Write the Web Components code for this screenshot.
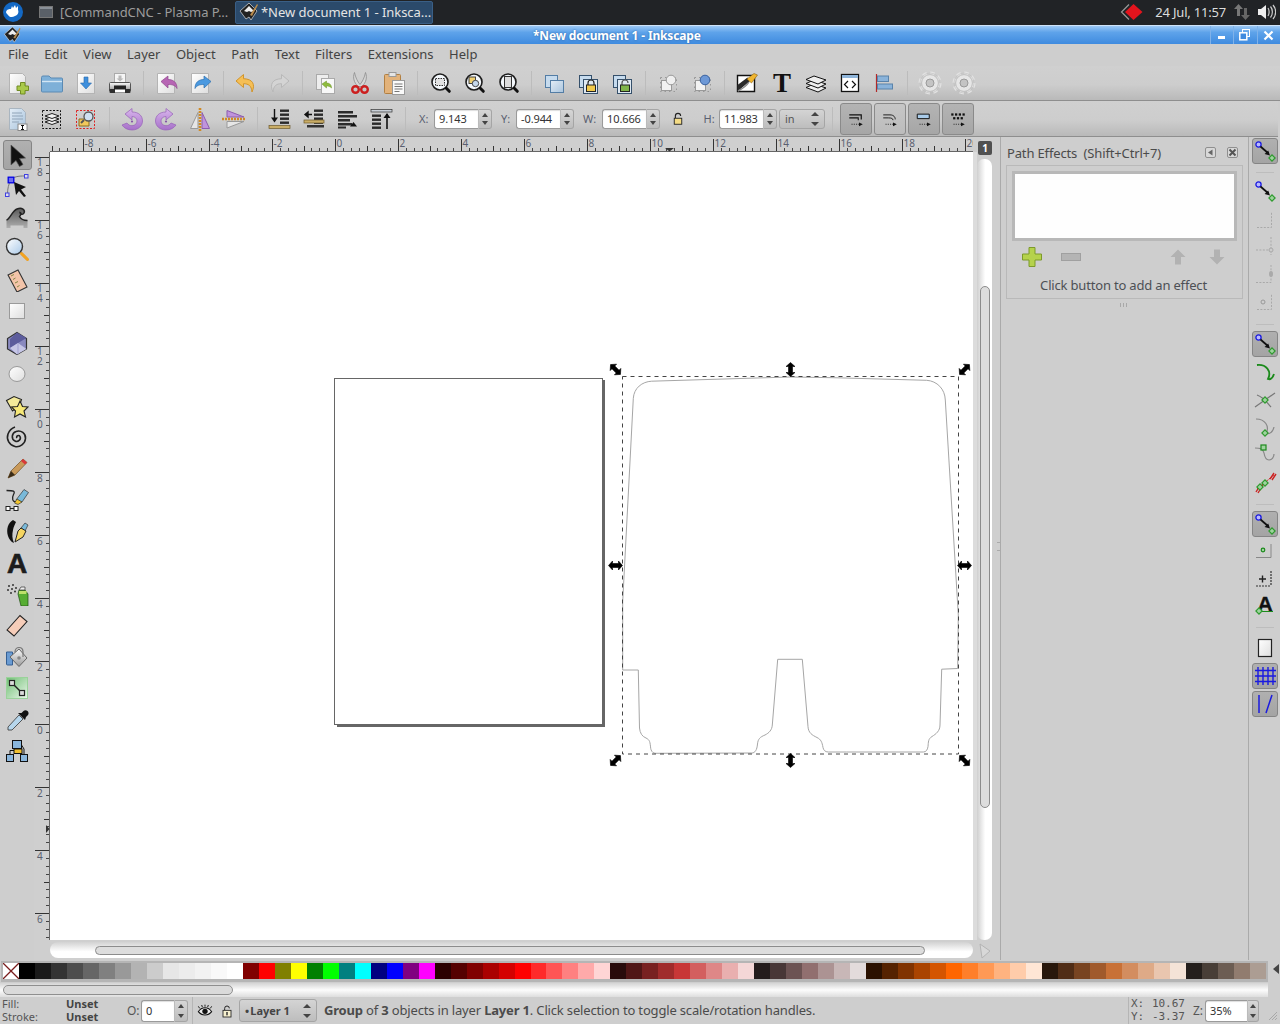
<!DOCTYPE html>
<html>
<head>
<meta charset="utf-8">
<title>New document 1 - Inkscape</title>
<style>
html, body { margin: 0; height: 100%; background: #cecece; overflow: hidden; }
body { font: 13px "Noto Sans", "Liberation Sans", sans-serif; color: #444; }
</style>
</head>
<body>
<inkscape-app></inkscape-app>
<script>
const DEFS = `<defs>
<linearGradient id="page" x1="0" y1="0" x2="1" y2="1"><stop offset="0" stop-color="#fff"/><stop offset="1" stop-color="#dedede"/></linearGradient>
<linearGradient id="blue" x1="0" y1="0" x2="1" y2="1"><stop offset="0" stop-color="#e4eef7"/><stop offset="1" stop-color="#a9c4dd"/></linearGradient>
<linearGradient id="purple" x1="0" y1="0" x2="0" y2="1"><stop offset="0" stop-color="#d9b6ec"/><stop offset="1" stop-color="#a670c9"/></linearGradient>
<linearGradient id="green" x1="0" y1="0" x2="1" y2="1"><stop offset="0" stop-color="#6fbf73"/><stop offset="1" stop-color="#eaf6ea"/></linearGradient>
<linearGradient id="steel" x1="0" y1="0" x2="0" y2="1"><stop offset="0" stop-color="#fafafa"/><stop offset="1" stop-color="#999"/></linearGradient>
<linearGradient id="steel2" x1="0" y1="0" x2="0" y2="1"><stop offset="0" stop-color="#5a5a5a"/><stop offset="1" stop-color="#aeaeae"/></linearGradient>
<linearGradient id="lens" x1="0" y1="0" x2="1" y2="1"><stop offset="0" stop-color="#fff"/><stop offset="1" stop-color="#a8c8e8"/></linearGradient>
</defs>`;

const lens = (inner) => `<g transform="translate(1.5 .5)"><circle cx="10.5" cy="10.5" r="8" fill="#f4f8fc" stroke="#1c1c1c" stroke-width="1.6"/>${inner}<path d="M16.8 16.8l3 3" stroke="#111" stroke-width="3" stroke-linecap="round"/></g>`;
const gear = `<circle cx="12" cy="12" r="10" fill="none" stroke="#e2e2e2" stroke-width="3" stroke-dasharray="4.4 3.45"/><circle cx="12" cy="12" r="10" fill="none" stroke="#bbb" stroke-width=".5"/><circle cx="12" cy="12" r="8.4" fill="#e6e6e6" stroke="#c0c0c0"/><circle cx="12" cy="12" r="4" fill="#c4c4c4" stroke="#9a9a9a"/>`;
const stack = (x, y) => `<g fill="#2a2a2a">${[0, 4, 8, 12].map(d => `<rect x="${x}" y="${y + d}" width="9" height="2.4"/>`).join("")}</g>`;
const nodeSq = (x, y, c = "#2f9b2f") => `<rect x="${x - 2.2}" y="${y - 2.2}" width="4.4" height="4.4" transform="rotate(45 ${x} ${y})" fill="#9fd39f" stroke="${c}" stroke-width="1.2"/>`;
const snapArrow = `<circle cx="5.5" cy="5.5" r="2.6" fill="#b9b9ff" stroke="#1a1ae0" stroke-width="1.3"/><path d="M7.5 7.5l8 7" stroke="#111" stroke-width="1.7"/><path d="M17 16.5l-5.4-1.4 3.6-3.6z" fill="#111"/>${nodeSq(19, 19)}`;
const dimLine = (d) => `<path d="${d}" fill="none" stroke="#a9a9a9" stroke-width="1" stroke-dasharray="2 1.4"/>`;
const tfArrow = `<path d="M6 19h10" stroke="#111" stroke-dasharray="1.5 1.5"/><path d="M16 16.5l5 2.5-5 2.5z" fill="#111"/>`;

const ICONS = {
  "new": `<path d="M3.5 2.5h13l3 3v17h-16z" fill="url(#page)" stroke="#b4b4b4"/><path d="M14.5 11.5h4.5v3.5h3.5v4.5h-3.5v3.5h-4.5v-3.5h-3.5v-4.5h3.5z" fill="#a9c94a" stroke="#718c22"/>`,
  "open": `<path d="M1.5 6.5q0-1.5 1.5-1.5h6l2 2h10.5q1 0 1 1v12q0 1-1 1H2.5q-1 0-1-1z" fill="#7eb0d8" stroke="#5a8ab4"/><path d="M2 10.5h20" stroke="#d3e6f4" stroke-width="1.4"/>`,
  "save": `<rect x="3.5" y="2.5" width="17" height="20" fill="url(#page)" stroke="#b4b4b4"/><path d="M10 6h4v6h3.5l-5.5 6-5.5-6H10z" fill="#3e8fdc" stroke="#2a6aad" stroke-width=".6"/>`,
  "print": `<rect x="6.5" y="2.5" width="11" height="9" fill="#f5f5f5" stroke="#aaa"/><path d="M10.5 4.5h3v3h2l-3.5 3-3.5-3h2z" fill="#b9b9b9"/><path d="M2.5 11.5h19q1 0 1 1v7h-21v-7q0-1 1-1z" fill="url(#steel)" stroke="#555"/><rect x="1.5" y="18" width="21" height="4" rx="1" fill="#2e2e2e"/><rect x="6" y="14.5" width="12" height="4" fill="#222"/><rect x="7" y="18.5" width="10" height="3" fill="#fff"/>`,
  "import": `<path d="M2.5 2.5h17v20h-17z" fill="url(#page)" stroke="#b4b4b4"/><path d="M6 10.5l7-5.5v3.5c5 0 9 2.5 9 9-2-3.5-5-4-9-4V17z" fill="#b765b4" stroke="#8e478c" stroke-width=".7"/>`,
  "export": `<path d="M2.5 2.5h17v20h-17z" fill="url(#page)" stroke="#b4b4b4"/><path d="M22 10.5l-7-5.5v3.5c-5 0-9 2.5-9 9 2-3.5 5-4 9-4V17z" fill="#4a99e0" stroke="#2f70ad" stroke-width=".7"/>`,
  "undo": `<path d="M10.5 3.5L3 10l7.5 6.5v-3.8c5 0 8 2 8.5 8.3 3.5-7.5 1-13-8.5-13.3z" fill="#f6bf55" stroke="#d1952c"/>`,
  "redo": `<path d="M13.5 3.5L21 10l-7.5 6.5v-3.8c-5 0-8 2-8.5 8.3-3.5-7.5-1-13 8.5-13.3z" fill="#d4d4d4" stroke="#b8b8b8"/>`,
  "dup": `<rect x="3.5" y="3.5" width="12" height="15" fill="#eee" stroke="#aaa"/><rect x="8.5" y="7.5" width="13" height="15" fill="#f8f8f8" stroke="#aaa"/><path d="M9 13l4.5-3v2c3 0 5 1.5 5 5-1.5-1.5-3-2-5-2v2z" fill="#8fbc3f" stroke="#6a9325" stroke-width=".5"/>`,
  "cut": `<path d="M6.5 1.5c1 5 3 9 5.5 12 2.5-3 4.5-7 5.5-12 2 5 .5 10-3.5 14h-4c-4-4-5.5-9-3.5-14z" fill="#d6d6d6" stroke="#8b8b8b" stroke-width=".8"/><circle cx="7.5" cy="18.5" r="3.3" fill="none" stroke="#cc1f1f" stroke-width="2.4"/><circle cx="16.5" cy="18.5" r="3.3" fill="none" stroke="#cc1f1f" stroke-width="2.4"/>`,
  "paste": `<rect x="2.5" y="3.5" width="16" height="19" rx="1" fill="#e2b27a" stroke="#b17f42"/><rect x="7" y="1.5" width="7" height="4" fill="#e5e5e5" stroke="#999"/><rect x="10.5" y="9.5" width="12" height="14" fill="#fafafa" stroke="#9a9a9a"/><path d="M12.5 13h8M12.5 15.5h8M12.5 18h8M12.5 20.5h5" stroke="#777"/>`,
  "zoomsel": lens(`<rect x="6" y="7" width="9" height="7" fill="#e2e2e2" stroke="#333" stroke-dasharray="1.5 1"/>`),
  "zoomdraw": lens(`<rect x="5.5" y="5.5" width="6.5" height="6.5" fill="#f0d070" stroke="#444"/><circle cx="12" cy="12" r="3.2" fill="#c5d8ec" stroke="#444"/>`),
  "zoompage": lens(`<rect x="7" y="5" width="7" height="11" fill="#ddd" stroke="#333"/>`),
  "dupobj": `<rect x="3.5" y="4.5" width="12" height="12" fill="#c6dbee" stroke="#537da5"/><rect x="8.5" y="9.5" width="13" height="12" fill="url(#blue)" stroke="#537da5"/>`,
  "clone": `<rect x="3.5" y="4.5" width="12" height="12" fill="#c6dbee" stroke="#35506b"/><rect x="7.5" y="8.5" width="14" height="14" fill="#dfe9f2" stroke="#35506b"/><path d="M12 14v-2a3 3 0 016 0v2" fill="none" stroke="#222" stroke-width="1.2"/><rect x="10.5" y="14" width="9" height="6.5" fill="#f2c94a" stroke="#222"/>`,
  "unlink": `<rect x="3.5" y="4.5" width="12" height="12" fill="#c6dbee" stroke="#35506b"/><rect x="7.5" y="8.5" width="14" height="14" fill="#dfe9f2" stroke="#35506b"/><path d="M12 14v-2a3 3 0 016 0" fill="none" stroke="#555" stroke-width="1.2"/><rect x="10.5" y="14" width="9" height="6.5" fill="#7fb44a" stroke="#222"/>`,
  "group": `<path d="M4.5 6.5v14h16v-14z" fill="none" stroke="#999" stroke-dasharray="1.5 3"/><rect x="5.5" y="9.5" width="10" height="10" fill="#f2f2f2" stroke="#999"/><circle cx="15" cy="9" r="4.8" fill="#efefef" stroke="#999"/>`,
  "ungroup": `<path d="M4.5 6.5v14h16v-14z" fill="none" stroke="#999" stroke-dasharray="1.5 3"/><rect x="5.5" y="9.5" width="10" height="10" fill="#f2f2f2" stroke="#999"/><circle cx="15" cy="9" r="4.8" fill="#6d98d6" stroke="#3a62a0"/>`,
  "fill": `<path d="M2.5 4.5h17v16h-17z" fill="#fff" stroke="#111" stroke-width="1.4"/><path d="M2.5 20.5V14l10-7.5 3 3z" fill="#2a2a2a"/><path d="M12 8L19 2.5l3.5 1.5-6 8z" fill="#f0b52f" stroke="#8a6212" stroke-width=".6"/><path d="M3 20c4-2 8-4 11-9" stroke="#888" fill="none" stroke-width="1.4"/>`,
  "T": `<text x="12" y="21" text-anchor="middle" font-family="Liberation Serif" font-weight="700" font-size="27" fill="#111">T</text>`,
  "layers": `<path d="M2 16.5l8-3.5 12 4-8 4z" fill="#eee" stroke="#111"/><path d="M2 12.5l8-3.5 12 4-8 4z" fill="#eee" stroke="#111"/><path d="M2 8.5l8-3.5 12 4-8 4z" fill="#eee" stroke="#111"/>`,
  "xml": `<rect x="3.5" y="3.5" width="17" height="17" fill="#fff" stroke="#111" stroke-width="1.3"/><rect x="4" y="4" width="16" height="3" fill="#8fb5da"/><path d="M10 10l-3.5 3.5 3.5 3.5M14 10l3.5 3.5-3.5 3.5" fill="none" stroke="#111" stroke-width="1.2"/>`,
  "align": `<path d="M4.5 3v18" stroke="#b22a2a" stroke-width="1.2"/><rect x="5.5" y="5" width="11" height="5.5" fill="#8ab3da" stroke="#5a83aa"/><rect x="5.5" y="13" width="15" height="5" fill="#8ab3da" stroke="#5a83aa"/>`,
  "gear": gear,
  "seldoc": `<path d="M3.5 1.5h12l4 4v17h-16z" fill="url(#blue)" stroke="#a9b5c0"/><path d="M6 6h10M6 9h11M6 12h11M6 15h7" stroke="#90a4b8"/><rect x="12" y="17" width="9" height="6.5" fill="#fff" stroke="#888"/><path d="M15 18.5h3M16.5 18.5v4M15 22.5h3" stroke="#111"/>`,
  "selall": `<rect x="2.5" y="3.5" width="18" height="18" fill="none" stroke="#111" stroke-dasharray="2 1.5"/><g fill="#f2f2f2" stroke="#222"><path d="M5 15l7-2.5 7 2.5-7 2.5z"/><path d="M5 12l7-2.5 7 2.5-7 2.5z"/><path d="M5 9l7-2.5 7 2.5-7 2.5z"/></g>`,
  "seltouch": `<rect x="2.5" y="3.5" width="18" height="18" fill="none" stroke="#d22" stroke-dasharray="2 1.5"/><path d="M5 12h8l2 2v5H5z" fill="#f1c85c" stroke="#8a6d20"/><circle cx="14.5" cy="9.5" r="4.5" fill="#cfe0f0" stroke="#555" stroke-width="1.3"/><path d="M10 13l-3 3" stroke="#555" stroke-width="2"/>`,
  "rotccw": `<path d="M12 5c7 0 10.5 4 10.5 9 0 5-4.5 9-10.5 9-4.5 0-8-2-10-5l5-2c1 1.8 3 2.7 5 2.7 2.8 0 5-2 5-4.7S14.8 9.5 12 9.5V13L5 7l7-5.5z" fill="url(#purple)" stroke="#9560b8" stroke-width=".7"/><circle cx="12" cy="14.5" r="1.1" fill="#8552a8"/>`,
  "rotcw": `<path d="M12 5C5 5 1.5 9 1.5 14c0 5 4.5 9 10.5 9 4.5 0 8-2 10-5l-5-2c-1 1.8-3 2.7-5 2.7-2.8 0-5-2-5-4.7s2.2-4.5 5-4.5V13l7-6-7-5.5z" fill="url(#purple)" stroke="#9560b8" stroke-width=".7"/><circle cx="12" cy="14.5" r="1.1" fill="#8552a8"/>`,
  "fliph": `<path d="M10 5.5L2.5 21.5H10z" fill="#e6e6e6" stroke="#999"/><path d="M14 5.5L21.5 21.5H14z" fill="#bf94dc" stroke="#8c5cae"/><path d="M12 1v23" stroke="#d08a26" stroke-width="2.6" stroke-dasharray="2 1"/>`,
  "flipv": `<path d="M22 10L5 3.5V10z" fill="#bf94dc" stroke="#8c5cae"/><path d="M22 14.5L5 21V14.5z" fill="#e6e6e6" stroke="#999"/><path d="M0 12h24" stroke="#d08a26" stroke-width="2.6" stroke-dasharray="2 1"/>`,
  "tobottom": stack(12, 2.5) + `<path d="M6.5 2v10" stroke="#111" stroke-width="1.4"/><path d="M3 10.5h7l-3.5 5z" fill="#111"/><rect x="1" y="18.5" width="21" height="3" fill="#c9ad66" stroke="#6d5a2c" stroke-width=".7"/>`,
  "lower": stack(12, 2.5) + `<path d="M3 7.5h7M3 7.5l3-2.5v5z" stroke="#111" stroke-width="1.4" fill="#111"/><rect x="2" y="13" width="20" height="3" fill="#c9ad66" stroke="#6d5a2c" stroke-width=".7"/><rect x="5" y="18" width="17" height="2.5" fill="#333"/>`,
  "raise": `<g fill="#2a2a2a"><rect x="2" y="4" width="15" height="2.5"/><rect x="2" y="8" width="19" height="2.5"/><rect x="2" y="12" width="12" height="2.5"/><rect x="2" y="16" width="14" height="2.5"/></g><path d="M14 19.5h7L17.5 15z" fill="#111"/><rect x="2" y="19.5" width="8" height="2" fill="#2a2a2a"/>`,
  "totop": `<rect x="1" y="2.5" width="21" height="2.5" fill="#c9d0d8" stroke="#333" stroke-width=".7"/>` + stack(2, 7.5) + `<path d="M17 7v15" stroke="#111" stroke-width="1.6"/><path d="M13.5 11h7L17 6z" fill="#111"/>`,
  "tf1": `<path d="M3 6.5h16v6" fill="none" stroke="#111" stroke-width="1.6"/><path d="M3 10.5h12v3" fill="none" stroke="#111" stroke-width="1.4"/>` + tfArrow,
  "tf2": `<path d="M3 6.5h9c5 0 7 3 7 6" fill="none" stroke="#111" stroke-width="1.2"/><path d="M3 10.5h7c4 0 6 1 6 3" fill="none" stroke="#111" stroke-width="1.2"/>` + tfArrow,
  "tf3": `<path d="M3 5.5h16v6H3z" fill="#a9cbe9" stroke="#111" stroke-width="1.3"/>` + tfArrow,
  "tf4": `<g fill="#111"><rect x="3" y="4.5" width="3" height="3"/><rect x="8" y="4.5" width="3" height="3"/><rect x="13" y="4.5" width="3" height="3"/><rect x="18" y="4.5" width="3" height="3"/><rect x="5.5" y="9.5" width="3" height="3"/><rect x="10.5" y="9.5" width="3" height="3"/><rect x="15.5" y="9.5" width="3" height="3"/></g>` + tfArrow,
  "lock": `<path d="M8.5 11V8a3.5 3.5 0 017 0" fill="none" stroke="#222" stroke-width="1.5"/><rect x="7" y="11" width="10" height="8" fill="#f5dc85" stroke="#222" stroke-width="1.2"/>`,
  "eye": `<path d="M2 13c3-5 7-6 10-6s7 1 10 6c-3 4-7 5-10 5s-7-1-10-5z" fill="#eee" stroke="#111" stroke-width="1.6"/><circle cx="12" cy="12.5" r="4" fill="#111"/><path d="M4 8L2 5M8 6L7 3M12 5.5V2.5M16 6l1-3M20 8l2-3" stroke="#111" stroke-width="1.4"/>`,
  "lock1": `<path d="M8.5 11V8a3.5 3.5 0 017 0" fill="none" stroke="#222" stroke-width="1.5"/><rect x="6" y="11" width="12" height="10" fill="#f6f0cf" stroke="#222" stroke-width="1.3"/><rect x="11" y="13.5" width="2" height="5" fill="#222"/>`,

  "select": `<path d="M6 2v20l5-4.5 3.5 6 3.5-2-3.5-6 6-.5z" fill="#111" stroke="#555" stroke-width=".7"/>`,
  "node": `<path d="M6 6C8 3 13 1.8 20 2M6 6C3.5 10 2.5 15 2.5 20" fill="none" stroke="#777" stroke-width="1"/><rect x="3.2" y="3.2" width="5.6" height="5.6" fill="#6f6ff0" stroke="#0000e6" stroke-width="1.3"/><rect x="19.5" y=".5" width="3.5" height="3.5" fill="#dde" stroke="#4040e0"/><rect x=".5" y="19" width="3.5" height="3.5" fill="#dde" stroke="#4040e0"/><path d="M9 8l12 5-5 2.5 5 6.5-2 1-5-6-3 4z" fill="#111"/>`,
  "tweak": `<path d="M1.5 23v-8C5 14 7 6 12 4c5-2 8.5 1 7 4-1 2-4 1.5-4-.5 2 .5.5 3-.5 4 1.5 3 5 4 8 4v7.5h-4v-2.5h-13V23z" fill="url(#steel2)"/><path d="M1.5 15C5 14 7 6 12 4c5-2 8.5 1 7 4-1 2-4 1.5-4-.5 2 .5.5 3-.5 4 1.5 3 5 4 8 4" fill="none" stroke="#222" stroke-width="1.5"/>`,
  "zoom": `<circle cx="9.5" cy="9.5" r="8" fill="url(#lens)" stroke="#333" stroke-width="1.4"/><path d="M15.5 15.5l7 7" stroke="#333" stroke-width="2"/><path d="M16.5 16.5l6 6" stroke="#f3a321" stroke-width="3" stroke-linecap="round"/>`,
  "measure": `<path d="M3 7l10-5 9 17-10 5z" fill="#f3c4a9" stroke="#333" stroke-width="1.1"/><path d="M6 8l3-1.500M8 11.500l2.500-1.500M10 15l3-1.500M12 19l2.500-1.500" stroke="#884" stroke-width="1"/>`,
  "rect": `<rect x="4.5" y="4.5" width="15" height="15" fill="url(#page)" stroke="#9a9a9a"/>`,
  "box3d": `<path d="M12 1.5l9.5 6V18L12 23.5 2.5 18V7.5z" fill="#8a8ac0" stroke="#333" stroke-width="1.2"/><path d="M12 1.5l-7 6.5v9l8-5 8.5-5z" fill="#5c5c9c"/><path d="M5 17l8-5 8.500 6L12 23.5z" fill="#c6c6e6"/><path d="M13 12V23" stroke="#a0a0d0"/>`,
  "ellipse": `<ellipse cx="12" cy="12" rx="8" ry="7.5" fill="url(#page)" stroke="#999"/>`,
  "star": `<path d="M1.5 6.5L9 2.5l7.5 3-2 6-7 5.5z" fill="#f3ea9a" stroke="#222" stroke-width="1.1"/><path d="M15 7l2.5 5.5 5.5.5-4 4 1.5 6-5.500-3-5.500 3 1-6-4-4 6-.5z" fill="#f6e878" stroke="#222" stroke-width="1.1"/>`,
  "spiral": `<path d="M12 13c-1.5-2 2-3.5 3-1.5 1.5 3-2 6-5 4.5-4-2-3.5-8 1-9.5 5-1.8 10 2 9.5 7-.5 5.5-5.5 9-10.5 8-5.5-1-9-7-7-12.5C4.5 5 7 3 10 2" fill="none" stroke="#222" stroke-width="1.6"/>`,
  "pencil": `<path d="M3 22l3-7L18 3l4 3.5L10 19z" fill="#c99a5a" stroke="#6e5029" stroke-width=".7"/><path d="M18 3l4 3.5-2 2-4-3.5z" fill="#d9383a"/><path d="M3 22l3-7 4 4z" fill="#3a2c18"/>`,
  "pen": `<path d="M1.5 2.5c7 0 9 .5 7 4-2 4-1 8 3 7" fill="none" stroke="#222" stroke-width="1.3"/><path d="M2 20.5h9" stroke="#222"/><rect x="1" y="18.5" width="4" height="4" fill="#fff" stroke="#222"/><rect x="9" y="18.5" width="4" height="4" fill="#fff" stroke="#222"/><path d="M11 12L19 1.5l4.5 3L17 14z" fill="#79b9d9" stroke="#333" stroke-width=".7"/><path d="M9.5 15l2.5-4 5 3-4 2.5z" fill="#f1c430" stroke="#333" stroke-width=".7"/>`,
  "callig": `<path d="M8 1C3 4 1 10 3 17c1 3 3 6 6 7-2-4-2-9-1-13 .5-3 2-6 3-8z" fill="#111"/><path d="M16 9l4-5 3 2-3 6z" fill="#79b9d9" stroke="#333" stroke-width=".7"/><path d="M13 12l3-3 5 3-3 6-8 5z" fill="#f5d560" stroke="#222" stroke-width="1"/>`,
  "A": `<text x="12" y="22" text-anchor="middle" font-family="Liberation Sans" font-weight="700" font-size="28" fill="#1c1c1c" stroke="#1c1c1c" stroke-width=".7">A</text>`,
  "spray": `<path d="M14 8h6l3 4v12h-7l-3-12z" fill="#57ad33" stroke="#1e4d12" stroke-width=".7"/><path d="M14 8l2-3h4v3z" fill="#eee" stroke="#333" stroke-width=".7"/><path d="M14 9h8l-1 3h-7z" fill="#bde06a"/><g fill="#333"><circle cx="11" cy="6" r="1"/><circle cx="8" cy="3" r="1"/><circle cx="7" cy="7" r="1"/><circle cx="10" cy="9.5" r="1"/><circle cx="4" cy="4" r="1"/><circle cx="3" cy="8" r="1"/><circle cx="6" cy="11" r="1"/></g>`,
  "eraser": `<path d="M2 17L15 2.5 22 8.5 9 23z" fill="#f6cdb9" stroke="#222" stroke-width="1.1"/>`,
  "bucket": `<path d="M1.5 7h6v13h-5q-1 0-1-1z" fill="#6a9bd2" stroke="#345f93"/><path d="M5 12l9-8 8 9-8 8.5z" fill="url(#steel)" stroke="#666"/><path d="M10 7c0-6 8-6 8 0v5" fill="none" stroke="#777" stroke-width="1.2"/><circle cx="14" cy="13" r="1.8" fill="#888"/>`,
  "gradient": `<rect x="1.5" y="1.5" width="21" height="21" fill="url(#green)" stroke="#9ad29a"/><path d="M7 7l10 10" stroke="#222" stroke-width="1.4"/><rect x="4.5" y="4.5" width="5" height="5" fill="#dcdcdc" stroke="#222" stroke-width="1.2"/><rect x="14.5" y="14.5" width="5" height="5" fill="#dcdcdc" stroke="#222" stroke-width="1.2"/>`,
  "dropper": `<path d="M14 7l4 4L7 22H3v-3z" fill="#b6d6ec" stroke="#333" stroke-width=".8"/><path d="M13 5l7 7 1-3 2-2c1-1.5.5-3-.5-4s-3-1.2-4 0l-2 2z" fill="#111"/>`,
  "connector": `<rect x="7.5" y="1.5" width="9" height="8" fill="#8ab6dc" stroke="#111"/><rect x="1.5" y="15.5" width="7" height="7" fill="#8ab6dc" stroke="#111"/><rect x="15.5" y="15.5" width="7" height="7" fill="#8ab6dc" stroke="#111"/><rect x="9" y="10" width="8" height="4.5" fill="#f2c030" stroke="#111"/><path d="M5 15v-3.5h4M19 15v-5l-2.5-4" fill="none" stroke="#111"/>`,

  "snap": snapArrow,
  "sbbox": dimLine("M4 20.5h14.5V5"),
  "sbedge": dimLine("M3 16h15M18 3v18") + `<circle cx="18" cy="16" r="2" fill="#ccc" stroke="#a9a9a9"/>`,
  "sbmid": dimLine("M3 20.5h15V3") + `<ellipse cx="18" cy="12" rx="2" ry="3" fill="#aaa"/>`,
  "sbcen": dimLine("M4 20.5h14.5V5") + `<circle cx="10" cy="13" r="2" fill="none" stroke="#999"/>`,
  "snodes": `<path d="M4 5c9-1 15 6 11 14 3 1 5-2 6-5" fill="none" stroke="#1b8a1b" stroke-width="1.8"/>`,
  "spaths": `<path d="M2 20L22 6" stroke="#777" stroke-width="1.2"/><path d="M4 8c8 3 10 8 14 12" stroke="#777" fill="none" stroke-width="1.2"/>${nodeSq(12, 13)}`,
  "scusp": `<path d="M3 4c9 0 14 7 10 15 4 0 7-2 8-7" fill="none" stroke="#888" stroke-width="1.2"/>${nodeSq(12, 18)}`,
  "ssmooth": `<path d="M2 6c4 0 8 0 9 5 1 6 3 7 5 7 3 0 5-3 5-6" fill="none" stroke="#888" stroke-width="1.2"/><rect x="8" y="3" width="5" height="5" fill="#9fd39f" stroke="#1b8a1b" stroke-width="1.2"/>`,
  "smid": `<path d="M3 22l5-8M5 23l5-8M17 9l4-6M19 10l4-6" stroke="#c22" stroke-width="1.4"/><path d="M4 19L21 5" stroke="#c22" stroke-dasharray="2 1"/>${nodeSq(12, 13)}${nodeSq(7, 17)}`,
  "sother": `<path d="M3 18.5h15V5" fill="none" stroke="#888"/><circle cx="10" cy="11" r="1.8" fill="#9fd39f" stroke="#1b8a1b" stroke-width="1.2"/>`,
  "srot": `<path d="M3 19h15M18 4v15" fill="none" stroke="#333" stroke-width="1.2" stroke-dasharray="2 1"/><path d="M6 12h7M9.5 8.5v7" stroke="#222" stroke-width="1.4"/>`,
  "stext": `<text x="12" y="17" text-anchor="middle" font-family="Liberation Sans" font-weight="700" font-size="21" fill="#111" stroke="#111" stroke-width=".4">A</text><path d="M6 17.5h14" stroke="#1b8a1b"/>${nodeSq(6, 17)}`,
  "spage": `<rect x="5.5" y="3.5" width="13" height="17" fill="url(#page)" stroke="#222" stroke-width="1.2"/>`,
  "sgrid": `<path d="M5 3v18M10 3v18M15 3v18M20 3v18M2 6.5h21M2 12h21M2 17.5h21" stroke="#1a1ae0" stroke-width="1.4"/>`,
  "sguide": `<path d="M6 3L6 21M19 3L13 21" stroke="#1a1ae0" stroke-width="1.5" fill="none"/>`,
};

class IconGlyph extends HTMLElement {
  connectedCallback() {
    if (this.shadowRoot) return;
    const size = this.getAttribute("size") || 24;
    this.attachShadow({ mode: "open" }).innerHTML = `
      <style>:host{display:inline-flex;width:${size}px;height:${size}px;flex:none} svg{display:block}</style>
      <svg width="${size}" height="${size}" viewBox="0 0 24 24">${DEFS}${ICONS[this.getAttribute("name")] || ""}</svg>`;
  }
}

class ToolButton extends HTMLElement {
  connectedCallback() {
    if (this.shadowRoot) return;
    this.attachShadow({ mode: "open" }).innerHTML = `
      <style>
      :host{display:flex;align-items:center;justify-content:center;box-sizing:border-box;flex:none;border:1px solid transparent;border-radius:3px}
      :host([active]){background:linear-gradient(#b0b0b0,#a4a4a4);border-color:#858585}
      </style>
      <icon-glyph name="${this.getAttribute("name")}" size="${this.getAttribute("size") || 24}"></icon-glyph>`;
  }
}

class ToolBar extends HTMLElement {
  constructor() {
    super();
    this.attachShadow({ mode: "open" }).innerHTML = `
      <style>
      :host{display:flex;box-sizing:border-box;align-items:center;background:linear-gradient(#d0d0d0 0,#cdcdcd 55%,#b9b9b9 100%);border-bottom:1px solid #8e8e8e;padding-left:1px}
      ::slotted(tool-button){width:34px;height:30px}
      </style><slot></slot>`;
  }
}

class ToolSep extends HTMLElement {
  constructor() {
    super();
    this.attachShadow({ mode: "open" }).innerHTML = `
      <style>:host{display:block;flex:none;width:12px;height:24px;background:linear-gradient(#bcbcbc,#bcbcbc) center/1px 100% no-repeat}</style>`;
  }
}

class SpinField extends HTMLElement {
  connectedCallback() {
    if (this.shadowRoot) return;
    const w = this.getAttribute("width") || 45;
    const sw = this.getAttribute("spin") || 13;
    this.attachShadow({ mode: "open" }).innerHTML = `
      <style>
      :host{display:flex;flex:none;height:20px;box-sizing:border-box}
      .v{box-sizing:border-box;width:${w}px;height:100%;background:#fff;border:1px solid #9a9a9a;border-right-color:#bbb;border-radius:3px 0 0 3px;padding-left:4px;font:11px "Noto Sans",sans-serif;color:#333;box-shadow:inset 0 1px 1px #ddd;white-space:nowrap;overflow:hidden;display:flex;align-items:center;letter-spacing:-.1px}
      .s{box-sizing:border-box;width:${sw}px;height:100%;border:1px solid #a5a5a5;border-left:0;border-radius:0 3px 3px 0;background:linear-gradient(#d6d6d6,#bdbdbd);position:relative}
      .s::before,.s::after{content:"";position:absolute;left:50%;margin-left:-3.5px;width:0;height:0;border-left:3.5px solid transparent;border-right:3.5px solid transparent}
      .s::before{top:3px;border-bottom:4px solid #444}
      .s::after{bottom:3px;border-top:4px solid #444}
      </style><div class="v">${this.getAttribute("value")}</div><div class="s"></div>`;
  }
}

class ComboField extends HTMLElement {
  connectedCallback() {
    if (this.shadowRoot) return;
    this.attachShadow({ mode: "open" }).innerHTML = `
      <style>
      :host{display:flex;flex:none;align-items:center;height:var(--h,20px);box-sizing:border-box;border:1px solid #a5a5a5;border-radius:3px;background:linear-gradient(#d4d4d4,#bdbdbd);font:11px "Noto Sans",sans-serif;color:#555;padding-left:5px;position:relative}
      .a{position:absolute;right:5px;top:50%;width:0;height:0;margin-top:-7px;border:4px solid transparent;border-top-width:0;border-bottom:4px solid #444}
      .b{position:absolute;right:5px;top:50%;width:0;height:0;margin-top:3px;border:4px solid transparent;border-bottom-width:0;border-top:4px solid #444}
      </style><slot></slot><i class="a"></i><i class="b"></i>`;
  }
}

class HRuler extends HTMLElement {
  connectedCallback() {
    if (this.shadowRoot) return;
    let g = "";
    for (let k = -36; k <= 81; k++) {
      const x = Math.round(335 + 7.875 * k);
      if (k % 8 === 0) {
        g += `<path d="M${x + .5} 139v12" stroke="#333"/><text x="${x + 1.5}" y="147" font-size="10" fill="#5a5f70" font-family="Noto Sans">${k / 4}</text>`;
      } else if (k % 4 === 0) {
        g += `<path d="M${x + .5} 146v5" stroke="#333"/>`;
      } else {
        g += `<path d="M${x + .5} 148v3" stroke="#444"/>`;
      }
    }
    this.attachShadow({ mode: "open" }).innerHTML = `
      <style>:host{display:block;background:#cfcfcf} svg{display:block}</style>
      <svg width="923" height="15" viewBox="50 137 923 15">
      ${g}<path d="M50 151.5h923" stroke="#666"/><path d="M665 148h9l-4.500 3.500z" fill="#333"/></svg>`;
  }
}

class VRuler extends HTMLElement {
  connectedCallback() {
    if (this.shadowRoot) return;
    let g = "";
    for (let k = -32; k <= 80; k++) {
      const y = Math.round(724 - 7.875 * k);
      if (y < 152 || y > 940) continue;
      if (k % 8 === 0) {
        const v = String(Math.abs(k / 4));
        g += `<path d="M35 ${y + .5}h14" stroke="#333"/>`;
        [...v].forEach((d, i) => {
          const base = y + (v.length > 1 ? 8.5 : 9.5) + i * 10;
          g += `<text x="37" y="${base}" font-size="10" fill="#5a5f70" font-family="Noto Sans">${d}</text>`;
        });
      } else if (k % 4 === 0) {
        g += `<path d="M44 ${y + .5}h5" stroke="#333"/>`;
      } else {
        g += `<path d="M46 ${y + .5}h3" stroke="#444"/>`;
      }
    }
    this.attachShadow({ mode: "open" }).innerHTML = `
      <style>:host{display:block;background:#cfcfcf} svg{display:block}</style>
      <svg width="16" height="788" viewBox="34 152 16 788">
      ${g}<path d="M49.5 152v788" stroke="#666"/><path d="M46 825v8l3.500-4z" fill="#333"/></svg>`;
  }
}

class DocCanvas extends HTMLElement {
  connectedCallback() {
    if (this.shadowRoot) return;
    const shape = "M633.3 398.3C634 388 642 381.7 651.7 381.2L790 377 833 377.7 926.7 380.3C937 381 945 389 945.3 400L958.3 615 957.7 668.5 941.7 669.2 940 725C940 731 936 734 932 736.5 928 739 928.5 742 928 746.5 927.5 750 926 752 923.3 752L846.7 752 828.3 752C825 752 823.5 750 823 747.5 822 742 821 739.5 817 737.5 812 735 808.5 733 808 726.7L802.3 659.3 777.7 659.3 772.3 725C772 730 769 733 765 735 760 737 758 739 757.5 744 757 750 755 753 751.7 753L655 753.3C652 753 651 750 650.7 748.3 650 742 650 740 646 738 642 736.5 640 733 639.5 728L638.3 670 622.7 670 622.7 601.7z";
    const arrow = (cx, cy, rot) => `<path transform="translate(${cx} ${cy}) rotate(${rot})" d="M-7 0L-3 -4.5V-2H3V-4.5L7 0 3 4.5V2H-3V4.5z" fill="#000" stroke="#000" stroke-width=".6"/>`;
    this.attachShadow({ mode: "open" }).innerHTML = `
      <style>:host{display:block;background:#fff;position:relative} svg{display:block}</style>
      <svg width="923" height="788" viewBox="50 152 923 788">
      <rect x="337" y="380" width="268" height="347" fill="#666"/>
      <rect x="334.5" y="378.5" width="268" height="346" fill="#fff" stroke="#666"/>
      <path d="${shape}" fill="#fff" stroke="#a6a6a6" stroke-width="1"/>
      <rect x="622.5" y="376.5" width="336" height="377.5" fill="none" stroke="#444" stroke-width="1" stroke-dasharray="4 4"/>
      ${arrow(615.5, 369.5, 45)}${arrow(964.5, 369.5, 135)}${arrow(615.5, 760.5, 135)}${arrow(964.5, 760.5, 45)}
      ${arrow(790.5, 369.5, 90)}${arrow(790.5, 760.5, 90)}${arrow(615.5, 565.5, 0)}${arrow(964.5, 565.5, 0)}
      </svg>`;
  }
}

class VScroll extends HTMLElement {
  constructor() {
    super();
    this.attachShadow({ mode: "open" }).innerHTML = `
      <style>
      :host{display:block;position:relative;background:#cfcfcf}
      .gutter{position:absolute;left:0;top:0;bottom:0;width:4px;background:#dcdcdc}
      .track{position:absolute;left:4px;top:7px;bottom:0;width:15px;background:linear-gradient(90deg,#cfcfcf,#fff 55%);border-radius:7px}
      .thumb{position:absolute;left:7px;top:134px;height:520px;width:8px;background:#ddd;border:1px solid #8c8c8c;border-radius:5px}
      .badge{position:absolute;left:5px;top:-11px;width:14px;height:14px;background:#505050;border-radius:2px;color:#fff;font:700 10px/14px "Noto Sans",sans-serif;text-align:center}
      .grip{position:absolute;right:0;top:390px;width:3px;height:7px;border-top:1px solid #aaa;border-bottom:1px solid #aaa}
      </style>
      <div class="gutter"></div><div class="track"></div><div class="thumb"></div><div class="badge">1</div><div class="grip"></div>`;
  }
}

class HScroll extends HTMLElement {
  constructor() {
    super();
    this.attachShadow({ mode: "open" }).innerHTML = `
      <style>
      :host{display:block;position:relative;background:#cfcfcf}
      .track{position:absolute;left:0;right:0;top:2px;height:16px;background:linear-gradient(#d2d2d2,#fff 60%);border-radius:8px}
      .thumb{position:absolute;left:45px;top:6px;width:828px;height:7px;background:#ddd;border:1px solid #8c8c8c;border-radius:5px}
      </style>
      <div class="track"></div><div class="thumb"></div>`;
  }
}

class EffectsPanel extends HTMLElement {
  constructor() {
    super();
    this.attachShadow({ mode: "open" }).innerHTML = `
      <style>
      :host{display:flex;flex-direction:column;box-sizing:border-box;background:#cecece;border-left:1px solid #aaa;border-right:1px solid #aaa;padding:0 5px;color:#4b4b4b;font:13px "Noto Sans",sans-serif}
      .head{height:26px;display:flex;align-items:center;padding:1px 0 0 1px;box-sizing:border-box;white-space:pre;margin-top:2px;flex:none;letter-spacing:-.15px}
      .head span{flex:1}
      .mini{box-sizing:border-box;width:11px;height:11px;border:1px solid #8f8f8f;border-radius:2px;background:#d8d8d8;margin-right:11px;position:relative;display:block}
      .mini svg{display:block}
      .frame{box-sizing:border-box;height:134px;border:1px solid #b9b9b9;padding:5px;display:flex;flex-direction:column;align-items:stretch;flex:none}
      .list{box-sizing:border-box;height:70px;background:#fefefe;border:3px solid #b8b8b8;outline:0;flex:none}
      .btns{display:flex;align-items:center;height:32px;padding:0 0 0 9px;flex:none}
      .btns svg{display:block}
      .msg{text-align:center;font-size:13px;line-height:18px;margin-top:3px;padding-right:2px;color:#4d5055;letter-spacing:-.18px}
      .dots{height:6px;margin-top:3px;background:linear-gradient(90deg,#a8a8a8 1px,transparent 1px) center/3px 4px repeat-x;width:9px;align-self:center;flex:none}
      </style>
      <div class="head"><span>Path Effects  (Shift+Ctrl+7)</span>
        <i class="mini"><svg width="9" height="9"><path d="M6.5 1.5v6L2 4.5z" fill="#666"/></svg></i>
        <i class="mini" style="margin-right:5px"><svg width="9" height="9"><path d="M1.5 1.5l6 6M7.5 1.5l-6 6" stroke="#555" stroke-width="2"/></svg></i>
      </div>
      <div class="frame">
        <div class="list"></div>
        <div class="btns">
          <svg width="22" height="22" viewBox="0 0 22 22"><path d="M8 1.5h6v6.5h6.5v6H14v6.5H8V14H1.5V8H8z" fill="#b5d24c" stroke="#7d9a2a"/></svg>
          <svg width="22" height="10" viewBox="0 0 22 10" style="margin-left:17px"><rect x="1.5" y="1.5" width="19" height="7" fill="#b4b4b4" stroke="#a0a0a0"/></svg>
          <svg width="18" height="18" viewBox="0 0 18 18" style="margin-left:87px"><path d="M9 1.5L16.5 9H12v7.5H6V9H1.5z" fill="#b2b2b2"/></svg>
          <svg width="18" height="18" viewBox="0 0 18 18" style="margin-left:21px"><path d="M9 16.5L16.5 9H12V1.5H6V9H1.5z" fill="#b2b2b2"/></svg>
        </div>
        <div class="msg">Click button to add an effect</div>
      </div>
      <div class="dots"></div>`;
  }
}

class SnapBar extends HTMLElement {
  constructor() {
    super();
    this.attachShadow({ mode: "open" }).innerHTML = `
      <style>
      :host{display:flex;flex-direction:column;align-items:center;box-sizing:border-box;padding:.2px 0 0 1px;background:#cecece}
      ::slotted(tool-button){width:26px;height:26px;margin:.8px 0}
      ::slotted(tool-button.wide){margin:1.3px 0}
      ::slotted(.sep){width:18px;height:1px;background:#bdbdbd;flex:none}
      </style><slot></slot>`;
  }
}

class ColorPalette extends HTMLElement {
  connectedCallback() {
    if (this.shadowRoot) return;
    const colors = ("000000 1a1a1a 333333 4d4d4d 666666 808080 999999 b3b3b3 cccccc e6e6e6 ececec f2f2f2 f9f9f9 ffffff " +
      "800000 ff0000 808000 ffff00 008000 00ff00 008080 00ffff 000080 0000ff 800080 ff00ff " +
      "2b0000 550000 800000 aa0000 d40000 ff0000 ff2a2a ff5555 ff8080 ffaaaa ffd5d5 " +
      "280b0b 501616 782121 a02c2c c83737 d35f5f de8787 e9afaf f4d7d7 " +
      "241c1c 483737 6c5353 916f6f ac9393 c8b7b7 e3dbdb " +
      "2b1100 552200 803300 aa4400 d45500 ff6600 ff7f2a ff9955 ffb380 ffccaa ffe6d5 " +
      "28170b 502d16 784421 a05a2c c87137 d38d5f deaa87 e9c6af f4e3d7 " +
      "241f1c 483e37 6c5d53 917c6f ac9d93").split(" ");
    this.attachShadow({ mode: "open" }).innerHTML = `
      <style>
      :host{display:block;background:#cecece;flex:none}
      .row{height:23px;box-sizing:border-box;padding:1px 0 0 1px;display:flex;position:relative}
      .frame{display:flex;box-sizing:border-box;width:1267px;height:21px;border:2px solid #b5b5b5;border-width:2px 2px 3px 2px}
      .none{width:16px;flex:none;background:#fff;display:block}
      .sw{flex:1}
      .more{position:absolute;right:1px;top:4px;width:0;height:0;border:5px solid transparent;border-right:6px solid #444;border-left:0}
      .bar{height:14px;background:linear-gradient(#d4d4d4,#fcfcfc 50%,#ddd);position:relative;width:1268px}
      .thumb{position:absolute;left:3px;top:2px;width:228px;height:8px;border:1px solid #8f8f8f;border-radius:5px;background:#dadada}
      </style>
      <div class="row"><div class="frame">
        <svg class="none" width="16" height="16" viewBox="0 0 16 16"><path d="M0 0l16 16M16 0L0 16" stroke="#7a1c1c" stroke-width="1.3"/></svg>
        ${colors.map(c => `<div class="sw" style="background:#${c}"></div>`).join("")}
      </div><i class="more"></i></div>
      <div class="bar"><div class="thumb"></div></div>`;
  }
}

class StatusBar extends HTMLElement {
  constructor() {
    super();
    this.attachShadow({ mode: "open" }).innerHTML = `
      <style>
      :host{display:flex;align-items:center;flex:none;height:27px;background:#cecece;color:#555;font:11px "Noto Sans",sans-serif;position:relative}
      .fs{display:grid;grid-template-columns:64px 50px;line-height:13px;width:127px;flex:none;padding-left:2px;box-sizing:border-box;white-space:nowrap;margin-top:-2px}
      .fs b{color:#444;font-weight:700}
      .o{width:14px;flex:none;font-size:12px}
      .vsep{width:1px;height:27px;background:#b5b5b5;flex:none}
      .msg{font-size:13px;margin-left:7px;margin-top:-1px;white-space:pre;color:#4b4b4b;flex:1;letter-spacing:-.17px}
      .coords{display:grid;grid-template-columns:12px 42px;font:11px/13px "DejaVu Sans Mono",monospace;color:#555;margin-left:2px;margin-top:-1px;width:54px;flex:none}
      .coords span:nth-child(even){text-align:right}
      .z{margin-left:8px;width:12px;flex:none;font-size:12px}
      .grip{position:absolute;right:2px;bottom:3px}
      combo-field{font-weight:700;--h:23px;width:78px;font-size:11px;color:#444;margin-left:4px}
      </style>
      <div class="fs"><span>Fill:</span><b>Unset</b><span>Stroke:</span><b>Unset</b></div>
      <span class="o">O:</span><slot name="opacity"></slot>
      <div class="vsep" style="margin-left:4px"></div>
      <slot name="vis"></slot>
      <combo-field>•&#8202;Layer 1</combo-field>
      <div class="msg"><b>Group</b> of <b>3</b> objects in layer <b>Layer 1</b>. Click selection to toggle scale/rotation handles.</div>
      <div class="vsep"></div>
      <div class="coords"><span>X:</span><span>10.67</span><span>Y:</span><span>-3.37</span></div>
      <span class="z">Z:</span><slot name="zoom"></slot>
      <svg class="grip" width="10" height="10"><path d="M9 1L1 9M9 4L4 9M9 7L7 9" stroke="#a8a8a8"/></svg>`;
  }
}

class InkTaskbar extends HTMLElement {
  constructor() {
    super();
    this.attachShadow({ mode: "open" }).innerHTML = `
      <style>
      :host{display:flex;align-items:center;height:25px;flex:none;box-sizing:border-box;padding-bottom:1px;background:#212326;color:#9c9c9c;font:13px "Noto Sans",sans-serif;position:relative;white-space:nowrap}
      .kde{margin:0 0 0 2px;flex:none;display:block}
      .task{display:flex;align-items:center;height:23px;box-sizing:border-box}
      .t1{margin-left:13px;width:198px;padding-left:23px;position:relative;letter-spacing:-.05px}
      .t1 svg{position:absolute;left:2px}
      .t2{width:198px;margin-left:0;background:#2b4a6b;border:1px solid #3a5f86;border-radius:2px;color:#e4e4e4;padding-left:3px;letter-spacing:-.05px}
      .t2 svg{flex:none;margin-right:2px}
      .tray{margin-left:auto;display:flex;align-items:center;color:#dcdcdc}
      .tray svg{display:block;flex:none}
      .date{margin-right:7px;letter-spacing:-.2px}
      </style>
      <svg class="kde" width="22" height="22" viewBox="0 0 22 22"><circle cx="11" cy="11" r="10" fill="#1368c4"/><path d="M4 11c1-3 3-3 5-3l1-3 1 2 2-3 1 3 2-2 0 4c1 2 0 5-3 6-3 2-6 1-7-1-1-1-2-2-2-3z" fill="#fff"/></svg>
      <div class="task t1">
        <svg width="14" height="12" viewBox="0 0 14 12"><rect x=".5" y=".5" width="13" height="11" fill="#5a6068" stroke="#777"/><rect x="1" y="1" width="12" height="2" fill="#8a9098"/></svg>
        <span>[CommandCNC - Plasma P...</span>
      </div>
      <div class="task t2">
        <svg width="20" height="20" viewBox="0 0 20 20"><path d="M10 1l8 8-6 9-2-3-3 2-6-8z" fill="#222" stroke="#ddd" stroke-width=".7"/><path d="M5 9l5-5 5 5-3 1-2-1-2 1z" fill="#eee"/><path d="M11 13L18 2l1 1-6 11z" fill="#b98b4c"/></svg>
        <span>*New document 1 - Inksca...</span>
      </div>
      <div class="tray">
        <svg width="24" height="18" viewBox="0 0 24 18" style="margin-right:11px"><path d="M9 1.5L1.5 9 9 16.5" fill="none" stroke="#999" stroke-width="1.2"/><path d="M13.5 1L22.5 9 13.5 17 5 9z" fill="#e3141d"/></svg>
        <span class="date">24 Jul, 11:57</span>
        <svg width="18" height="18" viewBox="0 0 18 18" style="margin-right:6px"><path d="M5.5 1L10 6H7v7H4V6H1z" fill="#777"/><path d="M12.5 17L17 12h-3V5h-3v7H8z" fill="#666"/></svg>
        <svg width="19" height="16" viewBox="0 0 19 16" style="margin-right:4px"><path d="M1 5h3l5-4v14l-5-4H1z" fill="#eee"/><path d="M11 4c1.5 2 1.5 6 0 8M13.5 2.5c2.5 3 2.5 8 0 11M16 1c3.5 4 3.5 10 0 14" fill="none" stroke="#ccc" stroke-width="1.2"/></svg>
      </div>`;
  }
}

class InkTitlebar extends HTMLElement {
  constructor() {
    super();
    this.attachShadow({ mode: "open" }).innerHTML = `
      <style>
      :host{display:flex;align-items:center;height:19px;flex:none;box-sizing:border-box;background:linear-gradient(#9cc8f5,#5ea3ea 35%,#3f8bdf);border-top:1px solid #cfe3f8;color:#fff;font:700 12px "Noto Sans",sans-serif;position:relative}
      .ico{margin-left:3px;display:block;flex:none}
      .title{position:absolute;left:533px;text-shadow:0 0 2px #2a5f9f;white-space:nowrap;letter-spacing:-.15px}
      .btns{margin-left:auto;display:flex;height:100%}
      .b{width:23.5px;height:100%;border-left:1px solid #7fb2ea;display:flex;align-items:center;justify-content:center;box-sizing:border-box}
      .b svg{display:block}
      </style>
      <svg class="ico" width="19" height="18" viewBox="0 0 20 20"><path d="M10 1l8 8-6 9-2-3-3 2-6-8z" fill="#222" stroke="#ddd" stroke-width=".7"/><path d="M5 9l5-5 5 5-3 1-2-1-2 1z" fill="#eee"/><path d="M11 13L18 2l1 1-6 11z" fill="#b98b4c"/></svg>
      <span class="title">*New document 1 - Inkscape</span>
      <div class="btns">
        <div class="b"><svg width="10" height="10"><rect x="1" y="6" width="7" height="3" fill="#fff"/></svg></div>
        <div class="b"><svg width="12" height="12"><rect x="3.5" y=".5" width="7" height="7" fill="none" stroke="#fff"/><rect x=".8" y="3.8" width="7" height="7" fill="#3f8bdf" stroke="#fff" stroke-width="1.5"/></svg></div>
        <div class="b"><svg width="11" height="11"><path d="M1.5 1.5l8 8M9.5 1.5l-8 8" stroke="#fff" stroke-width="2.2"/></svg></div>
      </div>`;
  }
}

class InkMenubar extends HTMLElement {
  constructor() {
    super();
    const items = ["File", "Edit", "View", "Layer", "Object", "Path", "Text", "Filters", "Extensions", "Help"];
    this.attachShadow({ mode: "open" }).innerHTML = `
      <style>
      :host{display:flex;align-items:center;height:22px;flex:none;box-sizing:border-box;padding:0 0 2px 8px;gap:15.5px;background:#cecece;color:#434343;font:13px "Noto Sans",sans-serif}
      </style>
      ${items.map(i => `<span>${i}</span>`).join("")}`;
  }
}

class InkscapeApp extends HTMLElement {
  constructor() {
    super();
    const btn = (n, extra = "") => `<tool-button name="${n}" ${extra}></tool-button>`;
    const tools = ["select", "node", "tweak", "zoom", "measure", "rect", "box3d", "ellipse", "star", "spiral", "pencil", "pen", "callig", "A", "spray", "eraser", "bucket", "gradient", "dropper", "connector"];
    const sep = (t, b) => `<div class="sep" style="margin:${t}px 0 ${b}px"></div>`;
    const nudge = `style="margin-left:1px"`;
    this.attachShadow({ mode: "open" }).innerHTML = `
      <style>
      :host{display:flex;flex-direction:column;height:1024px;width:1280px;background:#cecece}
      .cmd{height:35px;flex:none}
      .ctrl{height:36px;flex:none;width:1278px}
      .lb{font:11px "Noto Sans",sans-serif;color:#5a5f70;flex:none}
      .work{display:flex;height:823px;flex:none}
      .left{width:34px;flex:none;display:flex;flex-direction:column;align-items:center;padding-top:2.5px;box-sizing:border-box;background:#cecece}
      .left tool-button{width:29px;height:30px;margin-bottom:1.4px}
      .center{display:grid;grid-template-columns:16px 923px 27px;grid-template-rows:15px 788px 20px;flex:none}
      .corner{background:#cfcfcf}
      .corner2{background:#cfcfcf;position:relative}
      .corner2 svg{position:absolute;left:5px;top:3px}
      effects-panel{width:249px;flex:none}
      snap-bar{width:31px;flex:none}
      .toggles{display:flex;gap:2px}
      .toggles tool-button{width:32px;height:32px;background:linear-gradient(#b4b4b4,#a6a6a6);border-color:#8a8a8a}
      .toggles tool-button.off{background:linear-gradient(#c6c6c6,#bcbcbc)}
      </style>
      <ink-taskbar></ink-taskbar>
      <ink-titlebar></ink-titlebar>
      <ink-menubar></ink-menubar>
      <tool-bar class="cmd">
        ${btn("new")}${btn("open")}${btn("save")}${btn("print")}<tool-sep style="width:13px"></tool-sep>
        ${btn("import")}${btn("export")}<tool-sep style="width:10px"></tool-sep>
        ${btn("undo")}${btn("redo", nudge)}<tool-sep style="width:11px"></tool-sep>
        ${btn("dup")}${btn("cut", nudge)}${btn("paste")}<tool-sep></tool-sep>
        ${btn("zoomsel")}${btn("zoomdraw")}${btn("zoompage")}<tool-sep></tool-sep>
        ${btn("dupobj")}${btn("clone")}${btn("unlink")}<tool-sep></tool-sep>
        ${btn("group")}${btn("ungroup")}<tool-sep style="width:11px"></tool-sep>
        ${btn("fill")}${btn("T", nudge)}${btn("layers")}${btn("xml")}${btn("align")}<tool-sep></tool-sep>
        ${btn("gear")}${btn("gear")}
      </tool-bar>
      <tool-bar class="ctrl">
        ${btn("seldoc")}${btn("selall")}${btn("seltouch")}<tool-sep></tool-sep>
        ${btn("rotccw")}${btn("rotcw")}${btn("fliph")}${btn("flipv")}<tool-sep></tool-sep>
        ${btn("tobottom")}${btn("lower")}${btn("raise")}${btn("totop")}
        <tool-sep></tool-sep>
        <span class="lb" style="margin-left:8px;width:15px">X:</span><spin-field value="9.143"></spin-field>
        <span class="lb" style="margin-left:9px;width:15px">Y:</span><spin-field value="-0.944"></spin-field>
        <span class="lb" style="margin-left:9px;width:19px">W:</span><spin-field value="10.666"></spin-field>
        <icon-glyph name="lock" size="18" style="margin-left:9px"></icon-glyph>
        <span class="lb" style="margin-left:16.5px;width:15.5px">H:</span><spin-field value="11.983"></spin-field>
        <combo-field style="width:46px;margin-left:2px">in</combo-field>
        <tool-sep style="width:15px"></tool-sep>
        <div class="toggles">
          <tool-button name="tf1" size="18"></tool-button><tool-button name="tf2" size="18" class="off"></tool-button><tool-button name="tf3" size="18"></tool-button><tool-button name="tf4" size="18"></tool-button>
        </div>
      </tool-bar>
      <div class="work">
        <div class="left">${tools.map((t, i) => btn(t, i === 0 ? "active" : "")).join("")}</div>
        <div class="center">
          <div class="corner"></div><h-ruler></h-ruler><div class="corner"></div>
          <v-ruler></v-ruler><doc-canvas></doc-canvas><v-scroll></v-scroll>
          <div class="corner"></div><h-scroll></h-scroll>
          <div class="corner2"><svg width="14" height="16" viewBox="0 0 14 16"><path d="M2 1l10 7-8 7z" fill="#d8d8d8" stroke="#b4b4b4"/></svg></div>
        </div>
        <effects-panel></effects-panel>
        <snap-bar>
          ${btn("snap", "active")}${sep(7, 4.4)}${btn("snap")}${btn("sbbox")}${btn("sbedge")}${btn("sbmid")}${btn("sbcen")}${sep(8.8, 5.2)}
          ${btn("snap", "active")}${btn("snodes")}${btn("spaths")}${btn("scusp")}${btn("ssmooth")}${btn("smid")}${sep(8, 5.2)}
          ${btn("snap", "active")}${btn("sother")}${btn("srot")}${btn("stext")}${sep(6.4, 6.2)}
          ${btn("spage")}${btn("sgrid", 'active class="wide"')}${btn("sguide", 'active class="wide"')}
        </snap-bar>
      </div>
      <color-palette></color-palette>
      <status-bar>
        <spin-field slot="opacity" value="0" width="34" style="height:22px"></spin-field>
        <span slot="vis" style="display:flex;align-items:center;gap:6px;margin-left:4px">
          <icon-glyph name="eye" size="16"></icon-glyph><icon-glyph name="lock1" size="16"></icon-glyph>
        </span>
        <spin-field slot="zoom" value="35%" width="43" spin="11" style="height:22px;margin-right:21px"></spin-field>
      </status-bar>`;
  }
}

customElements.define("icon-glyph", IconGlyph);
customElements.define("tool-button", ToolButton);
customElements.define("tool-bar", ToolBar);
customElements.define("tool-sep", ToolSep);
customElements.define("spin-field", SpinField);
customElements.define("combo-field", ComboField);
customElements.define("h-ruler", HRuler);
customElements.define("v-ruler", VRuler);
customElements.define("doc-canvas", DocCanvas);
customElements.define("v-scroll", VScroll);
customElements.define("h-scroll", HScroll);
customElements.define("effects-panel", EffectsPanel);
customElements.define("snap-bar", SnapBar);
customElements.define("color-palette", ColorPalette);
customElements.define("status-bar", StatusBar);
customElements.define("ink-taskbar", InkTaskbar);
customElements.define("ink-titlebar", InkTitlebar);
customElements.define("ink-menubar", InkMenubar);
customElements.define("inkscape-app", InkscapeApp);
</script>
</body>
</html>
